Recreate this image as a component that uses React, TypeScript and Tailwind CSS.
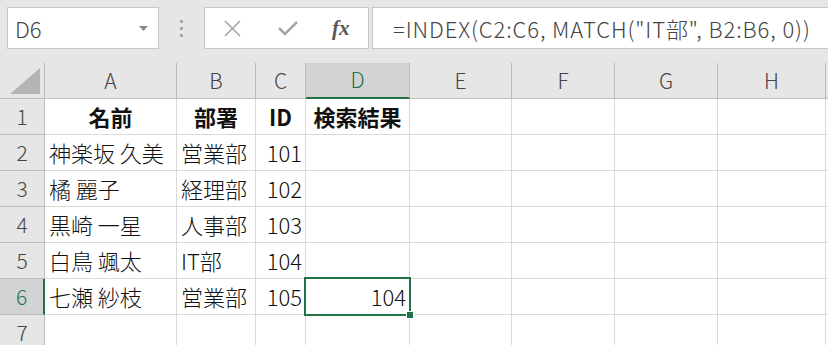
import React from "react";

const FONT = { fontFamily: '"Noto Sans CJK JP", "Noto Sans", sans-serif' };

const cols = ["A", "B", "C", "D", "E", "F", "G", "H"];

type Cell = { t?: string; bold?: boolean; align?: "l" | "c" | "r" };

const rows: Cell[][] = [
  [{ t: "名前", bold: true, align: "c" }, { t: "部署", bold: true, align: "c" }, { t: "ID", bold: true, align: "c" }, { t: "検索結果", bold: true, align: "c" }],
  [{ t: "神楽坂 久美" }, { t: "営業部" }, { t: "101", align: "r" }, {}],
  [{ t: "橘 麗子" }, { t: "経理部" }, { t: "102", align: "r" }, {}],
  [{ t: "黒崎 一星" }, { t: "人事部" }, { t: "103", align: "r" }, {}],
  [{ t: "白鳥 颯太" }, { t: "IT部" }, { t: "104", align: "r" }, {}],
  [{ t: "七瀬 紗枝" }, { t: "営業部" }, { t: "105", align: "r" }, { t: "104", align: "r" }],
  [{}, {}, {}, {}],
];

const colTemplate = "grid-cols-[45px_132px_79px_50px_104px_102px_103px_103px_108px_1fr]";

export default function App() {
  return (
    <div className="w-[828px] h-[345px] overflow-hidden bg-white relative" style={FONT}>
      {/* Toolbar */}
      <div className="h-[63px] bg-[#e6e6e6] flex items-start pt-[7px]">
        <div className="ml-[7px] w-[152px] h-[42px] bg-white border border-[#c6c6c6] flex items-center justify-between pl-[7px] pr-[10px]">
          <span className="text-[22px] text-[#444] leading-none font-light">D6</span>
          <svg width="9" height="5" viewBox="0 0 9 5"><path d="M0 0 H9 L4.5 5 Z" fill="#8a8a8a" /></svg>
        </div>
        <div className="w-[45px] h-[42px] flex flex-col items-center justify-center gap-[4px]">
          <div className="w-[3px] h-[3px] bg-[#a8a8a8]" />
          <div className="w-[3px] h-[3px] bg-[#a8a8a8]" />
          <div className="w-[3px] h-[3px] bg-[#a8a8a8]" />
        </div>
        <div className="w-[165px] h-[42px] bg-white border border-[#c6c6c6] flex items-center">
          <svg className="ml-[19px]" width="17" height="17" viewBox="0 0 17 17">
            <path d="M1 1 L16 16 M16 1 L1 16" stroke="#a6a6a6" strokeWidth="1.6" />
          </svg>
          <svg className="ml-[37px]" width="20" height="16" viewBox="0 0 20 16">
            <path d="M1 8 L7 14 L19 2" stroke="#a6a6a6" strokeWidth="2.6" fill="none" />
          </svg>
          <span
            className="ml-[34px] text-[21px] italic font-bold text-[#555] leading-none"
            style={{ fontFamily: '"Liberation Serif", serif' }}
          >
            fx
          </span>
        </div>
        <div className="ml-[3px] flex-1 h-[42px] bg-white border border-[#c6c6c6] border-r-0 flex items-center pl-[20px]">
          <span className="text-[22px] text-[#444] leading-none whitespace-nowrap font-light tracking-[0.9px]">
            =INDEX(C2:C6, MATCH("IT部", B2:B6, 0))
          </span>
        </div>
      </div>

      {/* Grid */}
      <div className={`grid ${colTemplate} auto-rows-[36px]`}>
        {/* header row */}
        <div className="bg-[#e6e6e6] border-r border-b border-[#bcbcbc] flex items-end justify-end p-[4px]">
          <svg width="30" height="26" viewBox="0 0 30 26"><path d="M30 0 V26 H0 Z" fill="#b4b4b4" /></svg>
        </div>
        {cols.map((c) => (
          <div
            key={c}
            className={
              c === "D"
                ? "bg-[#d3d3d3] border-r border-[#bcbcbc] border-b-2 border-b-[#217346] flex items-center justify-center text-[21px] text-[#217346] font-light"
                : "bg-[#e6e6e6] border-r border-b border-[#bcbcbc] flex items-center justify-center text-[21px] text-[#444] font-light"
            }
          >
            {c}
          </div>
        ))}
        <div className="bg-[#e6e6e6] border-b border-[#bcbcbc]" />

        {rows.map((r, i) => {
          const n = i + 1;
          const sel = n === 6;
          return (
            <React.Fragment key={n}>
              <div
                className={
                  sel
                    ? "bg-[#d3d3d3] border-r-2 border-r-[#217346] border-b border-[#bcbcbc] flex items-center justify-center text-[21px] text-[#217346] font-light"
                    : "bg-[#e6e6e6] border-r border-b border-[#bcbcbc] flex items-center justify-center text-[21px] text-[#444] font-light"
                }
              >
                {n}
              </div>
              {cols.map((c, j) => {
                const cell = r[j] || {};
                const al = cell.align || "l";
                const isSel = sel && c === "D";
                return (
                  <div
                    key={c}
                    className={
                      "relative border-r border-b border-[#d9d9d9] flex items-center text-[22px] text-[#111] whitespace-nowrap " +
                      (isSel ? "z-10 " : "") +
                      (al === "c" ? "justify-center " : al === "r" ? "justify-end pr-[3px] " : "justify-start pl-[4px] ") +
                      (cell.bold ? "font-bold" : "font-light")
                    }
                  >
                    {cell.t}
                    {isSel && (
                      <>
                        <div className="absolute left-[-2px] top-[-2px] right-[-2px] bottom-[-2px] border-2 border-[#217346]" />
                        <div className="absolute right-[-5px] bottom-[-5px] w-[8px] h-[8px] bg-[#217346] border border-white" />
                      </>
                    )}
                  </div>
                );
              })}
              <div className="border-b border-[#d9d9d9]" />
            </React.Fragment>
          );
        })}
      </div>
    </div>
  );
}
